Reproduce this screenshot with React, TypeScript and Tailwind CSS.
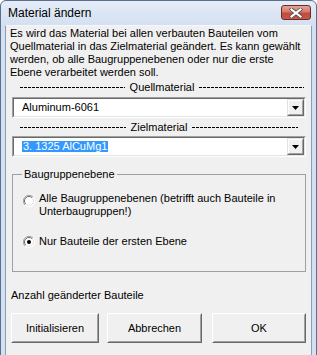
import React from "react";

function Dashes({ label, mt, mr }: { label: string; mt: string; mr: string }) {
  return (
    <div className={`flex items-center h-[13px] ml-[14px] ${mt} ${mr}`}>
      <div className="flex-1 h-px bg-[repeating-linear-gradient(90deg,#000_0px,#000_3px,transparent_3px,transparent_4px)]" />
      <span className="px-[5px] leading-[13px]">{label}</span>
      <div className="flex-1 h-px bg-[repeating-linear-gradient(90deg,#000_0px,#000_3px,transparent_3px,transparent_4px)]" />
    </div>
  );
}

function Combo({ value, selected, mt }: { value: string; selected?: boolean; mt: string }) {
  return (
    <div className={`${mt} ml-[6px] mr-[5px] h-[21px] flex border border-t-[#a0a0a0] border-l-[#a0a0a0] border-b-white border-r-white`}>
      <div className="flex-1 flex border border-t-[#696969] border-l-[#696969] border-b-[#e3e3e3] border-r-[#e3e3e3] bg-white">
        <div className="flex-1 flex items-center pl-[8px]">
          <span
            className={
              selected
                ? "bg-[#3399ff] text-white leading-[11px] h-[11px] px-px"
                : "leading-[13px]"
            }
          >
            {value}
          </span>
        </div>
        <div className="w-[17px] flex border border-t-[#e3e3e3] border-l-[#e3e3e3] border-b-[#696969] border-r-[#696969] bg-[#f0f0f0]">
          <div className="flex-1 flex items-center justify-center border border-t-white border-l-white border-b-[#a0a0a0] border-r-[#a0a0a0]">
            <svg width="7" height="4" viewBox="0 0 7 4">
              <path d="M0 0H7L3.5 4Z" fill="#000" />
            </svg>
          </div>
        </div>
      </div>
    </div>
  );
}

function Radio({ checked }: { checked?: boolean }) {
  return (
    <svg width="12" height="12" viewBox="0 0 12 12" className="shrink-0">
      <circle cx="6" cy="6" r="5.5" fill="#ffffff" />
      <path d="M10 2 A5.5 5.5 0 0 0 2 10" stroke="#a0a0a0" strokeWidth="1" fill="none" />
      <path d="M9.2 2.8 A4.5 4.5 0 0 0 2.8 9.2" stroke="#696969" strokeWidth="1" fill="none" />
      <path d="M10 2 A5.5 5.5 0 0 1 2 10" stroke="#ffffff" strokeWidth="1" fill="none" />
      <path d="M9.2 2.8 A4.5 4.5 0 0 1 2.8 9.2" stroke="#e3e3e3" strokeWidth="1" fill="none" />
      {checked && <circle cx="6" cy="6" r="2" fill="#000" />}
    </svg>
  );
}

function Btn({ label, w, ml }: { label: string; w: string; ml: string }) {
  return (
    <div className={`${w} ${ml} h-[30px] flex border border-t-white border-l-white border-b-[#696969] border-r-[#696969] bg-[#f0f0f0]`}>
      <div className="flex-1 flex items-center justify-center border border-t-[#f0f0f0] border-l-[#f0f0f0] border-b-[#a0a0a0] border-r-[#a0a0a0]">
        {label}
      </div>
    </div>
  );
}

export default function App() {
  return (
    <div className="w-[317px] h-[355px] overflow-hidden bg-white">
      <div className="w-[317px] h-[362px] flex flex-col rounded-t-[6px] border border-[#5b6f8d] bg-[linear-gradient(180deg,#e4ecf7_0px,#d3e0f1_25px,#d3e0f1_100%)]">
        <div className="h-[24px] flex items-start shrink-0">
          <span className="ml-[7px] mt-[5px] text-[12px] leading-[15px] text-black font-['Liberation_Sans',sans-serif]">
            Material ändern
          </span>
          <div className="ml-auto mr-[5px] mt-[4px] w-[30px] h-[15px] rounded-[3px] border border-[#6b2a27] bg-[linear-gradient(180deg,#e6a195_0%,#d47a6e_45%,#c14a3e_55%,#c9584b_100%)] flex items-center justify-center">
            <svg width="14" height="10" viewBox="0 0 14 10">
              <path d="M2.5 1.5L11.5 8.5M11.5 1.5L2.5 8.5" stroke="#4a4a4a" strokeWidth="3.6" strokeLinecap="square" />
              <path d="M2.5 1.5L11.5 8.5M11.5 1.5L2.5 8.5" stroke="#ffffff" strokeWidth="2.2" strokeLinecap="square" />
            </svg>
          </div>
        </div>
        <div className="ml-[4px] mr-[4px] flex-1 flex flex-col border border-t-[#f4f8fc] border-l-[#8a9db8] border-r-[#8a9db8] border-b-[#8a9db8] bg-[#f0f0f0] text-[11px] leading-[13px] text-black font-['Liberation_Sans',sans-serif]">
          <div className="pl-[4px] pt-px whitespace-nowrap">
            <div>Es wird das Material bei allen verbauten Bauteilen vom</div>
            <div>Quellmaterial in das Zielmaterial geändert. Es kann gewählt</div>
            <div>werden, ob alle Baugruppenebenen oder nur die erste</div>
            <div>Ebene verarbeitet werden soll.</div>
          </div>
          <Dashes label="Quellmaterial" mt="mt-[2px]" mr="mr-[7px]" />
          <Combo value="Aluminum-6061" mt="mt-[3px]" />
          <Dashes label="Zielmaterial" mt="mt-[3px]" mr="mr-[13px]" />
          <Combo value="3. 1325 AlCuMg1" selected mt="mt-[2px]" />
          <div className="relative mt-[17px] ml-[6px] mr-[5px] h-[98px] border border-[#a0a0a0]">
            <span className="absolute left-[9px] top-[-7px] px-[2px] bg-[#f0f0f0] leading-[13px]">
              Baugruppenebene
            </span>
            <div className="flex flex-col pl-[10px] pt-[17px]">
              <div className="flex items-start">
                <div className="mt-[3px]">
                  <Radio />
                </div>
                <div className="ml-[4px] leading-[13px]">
                  Alle Baugruppenebenen (betrifft auch Bauteile in
                  <br />
                  Unterbaugruppen!)
                </div>
              </div>
              <div className="flex items-start mt-[17px]">
                <div className="mt-[1px]">
                  <Radio checked />
                </div>
                <div className="ml-[4px] leading-[13px]">Nur Bauteile der ersten Ebene</div>
              </div>
            </div>
          </div>
          <div className="mt-[17px] ml-[5px]">Anzahl geänderter Bauteile</div>
          <div className="flex mt-[11px] ml-[5px]">
            <Btn label="Initialisieren" w="w-[88px]" ml="ml-0" />
            <Btn label="Abbrechen" w="w-[95px]" ml="ml-[8px]" />
            <Btn label="OK" w="w-[94px]" ml="ml-[10px]" />
          </div>
        </div>
      </div>
    </div>
  );
}
